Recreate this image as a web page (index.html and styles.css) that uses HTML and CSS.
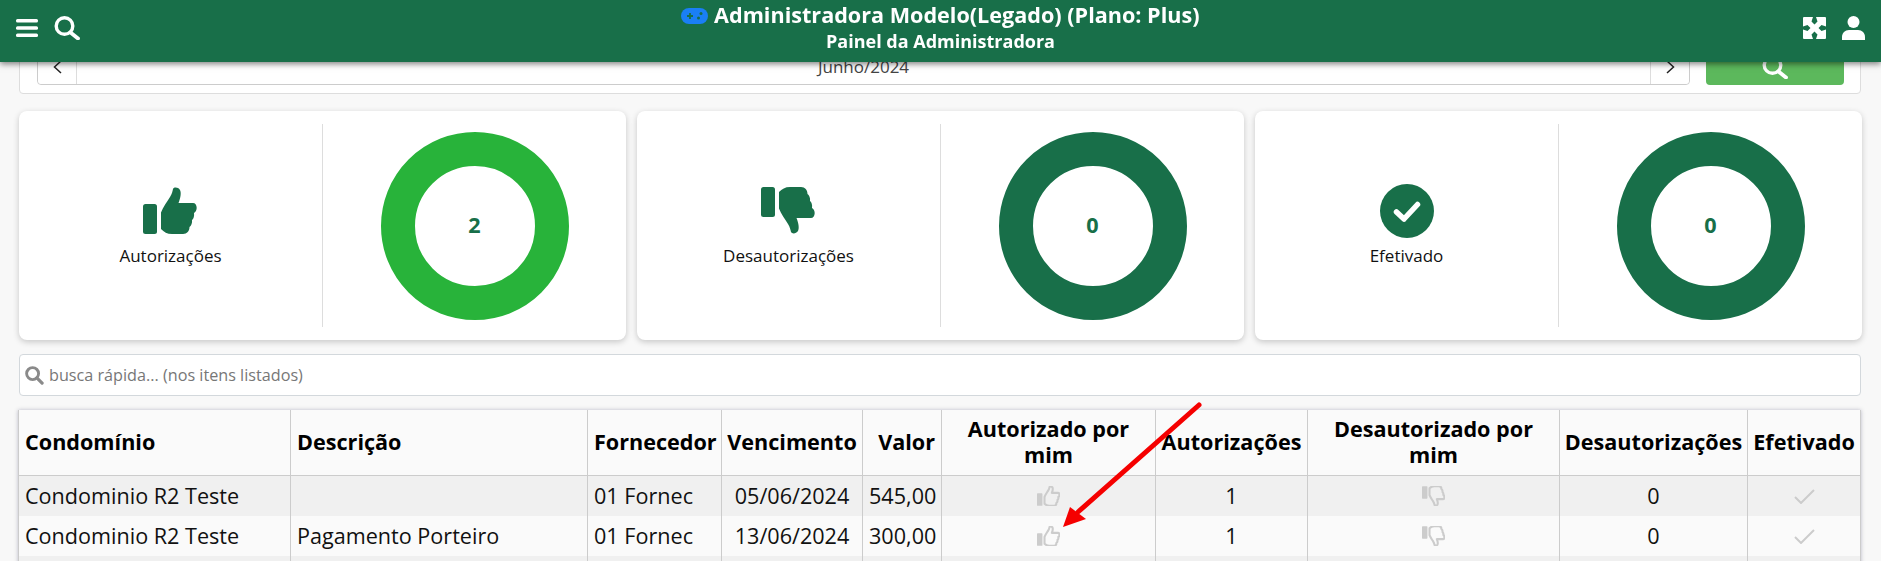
FILE: index.html
```html
<!DOCTYPE html>
<html lang="pt-BR">
<head>
  <meta charset="UTF-8">
  <title>Painel da Administradora</title>
  <link rel="stylesheet" href="styles.css">
</head>
<body>

<svg class="defs" width="0" height="0">
  <defs>
    <path id="hand" d="M18 25.5 C20 20 24 15 27 10 C29 7 29.500 4 30 2 C31 0 35 0 37 3 C38.500 6 37.500 11 35.500 16 H50 C54.500 16 55 24 51 26 C51.500 29 50.500 32 49 33 C49.500 36 48 39 46.500 40 C46.500 44 44 47 40 47 H29 C24 47 21 45 18 42 Z"/>
  </defs>
</svg>

<header class="topbar">
  <div class="topbar-left">
    <svg class="ico-menu" viewBox="0 0 22 18"><rect width="22" height="3.500" rx="1.500"/><rect y="7.200" width="22" height="3.500" rx="1.500"/><rect y="14.500" width="22" height="3.500" rx="1.500"/></svg>
    <svg class="ico-search" viewBox="0 0 26 24"><circle cx="10.500" cy="10" r="8.300" fill="none" stroke="#fff" stroke-width="3.400"/><path d="M16.500 16.500 L24 22.500" stroke="#fff" stroke-width="3.800" stroke-linecap="round"/></svg>
  </div>
  <div class="topbar-title">
    <h1>
      <svg class="ico-game" viewBox="0 0 27 16"><rect width="27" height="16" rx="8" fill="#1a7ff5"/><path d="M6 8 h6 M9 5 v6" stroke="#186f49" stroke-width="1.800"/><circle cx="20" cy="5.500" r="1.500" fill="#186f49"/><circle cx="17.500" cy="10" r="1.500" fill="#186f49"/></svg>
      Administradora Modelo(Legado) (Plano: Plus)
    </h1>
    <h2>Painel da Administradora</h2>
  </div>
  <div class="topbar-right">
    <svg class="ico-expand" viewBox="0 0 23 22"><path fill-rule="evenodd" d="M1 0 H22 Q23 0 23 1 V21 Q23 22 22 22 H1 Q0 22 0 21 V1 Q0 0 1 0 Z M10 0 H13 L14.500 4.500 L11.500 7.500 L8.500 4.500 Z M10 22 H13 L14.500 17.500 L11.500 14.500 L8.500 17.500 Z M0 9.500 V12.500 L4.500 14 L7.500 11 L4.500 8 Z M23 9.500 V12.500 L18.500 14 L15.500 11 L18.500 8 Z"/></svg>
    <svg class="ico-user" viewBox="0 0 23 24"><circle cx="11.500" cy="6" r="6"/><path d="M0 24 V21 C0 17 3 14 7 14 H16 C20 14 23 17 23 21 V24 Z"/></svg>
  </div>
</header>

<main class="page">

  <section class="filter">
    <div class="month">
      <button class="month-btn"><svg viewBox="0 0 9 14"><path d="M8 1 L1.500 7 L8 13" fill="none" stroke="#222" stroke-width="1.500"/></svg></button>
      <div class="month-label">Junho/2024</div>
      <button class="month-btn"><svg viewBox="0 0 9 14"><path d="M1 1 L7.500 7 L1 13" fill="none" stroke="#222" stroke-width="1.500"/></svg></button>
    </div>
    <button class="btn-search">
      <svg viewBox="0 0 26 24"><circle cx="10.500" cy="10" r="8.300" fill="none" stroke="#fff" stroke-width="3.400"/><path d="M16.500 16.500 L24 22.500" stroke="#fff" stroke-width="3.800" stroke-linecap="round"/></svg>
    </button>
  </section>

  <section class="cards">
    <div class="card">
      <div class="card-info">
        <svg class="card-ico" viewBox="0 0 55 47"><rect y="17" width="14" height="30" rx="2.500"/><use href="#hand"/></svg>
        <span>Autorizações</span>
      </div>
      <div class="card-chart">
        <div class="donut donut-on"><b>2</b></div>
      </div>
    </div>
    <div class="card">
      <div class="card-info">
        <svg class="card-ico" viewBox="0 0 55 47"><g transform="matrix(1 0 0 -1 0 47)"><rect y="17" width="14" height="30" rx="2.500"/><use href="#hand"/></g></svg>
        <span>Desautorizações</span>
      </div>
      <div class="card-chart">
        <div class="donut"><b>0</b></div>
      </div>
    </div>
    <div class="card">
      <div class="card-info">
        <svg class="card-ico card-ico-round" viewBox="0 0 54 54"><circle cx="27" cy="27" r="27"/><path d="M16.500 28 L24 35 L37.500 20.500" fill="none" stroke="#fff" stroke-width="5.500" stroke-linecap="round" stroke-linejoin="round"/></svg>
        <span>Efetivado</span>
      </div>
      <div class="card-chart">
        <div class="donut"><b>0</b></div>
      </div>
    </div>
  </section>

  <div class="quick-search">
    <svg viewBox="0 0 20 20"><circle cx="8" cy="8" r="6.300" fill="none" stroke="#8a8a8a" stroke-width="3"/><path d="M12.500 12.500 L18 18" stroke="#8a8a8a" stroke-width="3.400" stroke-linecap="round"/></svg>
    <span>busca rápida... (nos itens listados)</span>
  </div>

  <table class="grid">
    <colgroup>
      <col class="c-cond"><col class="c-desc"><col class="c-forn"><col class="c-venc"><col class="c-valor">
      <col class="c-aut-mim"><col class="c-aut"><col class="c-des-mim"><col class="c-des"><col class="c-efe">
    </colgroup>
    <thead>
      <tr>
        <th>Condomínio</th>
        <th>Descrição</th>
        <th>Fornecedor</th>
        <th class="mid">Vencimento</th>
        <th class="num">Valor</th>
        <th class="mid">Autorizado por mim</th>
        <th class="mid">Autorizações</th>
        <th class="mid">Desautorizado por mim</th>
        <th class="mid">Desautorizações</th>
        <th class="mid">Efetivado</th>
      </tr>
    </thead>
    <tbody>
      <tr>
        <td>Condominio R2 Teste</td>
        <td></td>
        <td>01 Fornec</td>
        <td class="mid">05/06/2024</td>
        <td class="num">545,00</td>
        <td class="mid"><svg class="row-ico" viewBox="0 0 55 47"><rect y="17" width="13" height="30" rx="1.500" class="solid"/><use href="#hand" class="outline"/></svg></td>
        <td class="mid">1</td>
        <td class="mid"><svg class="row-ico" viewBox="0 0 55 47"><g transform="matrix(1 0 0 -1 0 47)"><rect y="17" width="13" height="30" rx="1.500" class="solid"/><use href="#hand" class="outline"/></g></svg></td>
        <td class="mid">0</td>
        <td class="mid"><svg class="row-check" viewBox="0 0 21 15"><path d="M1 8 L7 14 L20 1" fill="none" stroke="#ccc" stroke-width="2"/></svg></td>
      </tr>
      <tr>
        <td>Condominio R2 Teste</td>
        <td>Pagamento Porteiro</td>
        <td>01 Fornec</td>
        <td class="mid">13/06/2024</td>
        <td class="num">300,00</td>
        <td class="mid"><svg class="row-ico" viewBox="0 0 55 47"><rect y="17" width="13" height="30" rx="1.500" class="solid"/><use href="#hand" class="outline"/></svg></td>
        <td class="mid">1</td>
        <td class="mid"><svg class="row-ico" viewBox="0 0 55 47"><g transform="matrix(1 0 0 -1 0 47)"><rect y="17" width="13" height="30" rx="1.500" class="solid"/><use href="#hand" class="outline"/></g></svg></td>
        <td class="mid">0</td>
        <td class="mid"><svg class="row-check" viewBox="0 0 21 15"><path d="M1 8 L7 14 L20 1" fill="none" stroke="#ccc" stroke-width="2"/></svg></td>
      </tr>
      <tr>
        <td>&nbsp;</td><td></td><td></td><td></td><td></td><td></td><td></td><td></td><td></td><td></td>
      </tr>
    </tbody>
  </table>
</main>

<svg class="arrow" viewBox="0 0 1881 561">
  <path d="M1199 405 L1078 512" fill="none" stroke="#f50000" stroke-width="5" stroke-linecap="round"/>
  <path d="M1063 527 L1070 507 L1086 519 Z" fill="#f50000"/>
</svg>

</body>
</html>
```

FILE: styles.css
```css
html, body {
  height: 100%;
  overflow: hidden;
}

body {
  margin: 0;
  font-family: "Open Sans", sans-serif;
  background-color: #f8f8f8;
  color: #000;
}

.defs {
  position: absolute;
}

.topbar {
  position: fixed;
  top: 0;
  left: 0;
  right: 0;
  height: 62px;
  display: flex;
  justify-content: space-between;
  background-color: #186f49;
  box-shadow: 0 2px 6px rgba(0, 0, 0, 0.5);
  z-index: 10;
}

.topbar svg {
  fill: #fff;
  display: block;
}

.topbar-left {
  display: flex;
  align-items: center;
  gap: 16px;
  padding: 0 0 6px 16px;
}

.topbar-right {
  display: flex;
  align-items: center;
  gap: 16px;
  padding: 0 16px 6px 0;
}

.ico-menu { width: 22px; height: 18px; }
.ico-search { width: 26px; height: 24px; }
.ico-expand { width: 23px; height: 22px; }
.ico-user { width: 23px; height: 24px; }

.topbar-title {
  position: absolute;
  left: 0;
  right: 0;
  top: 2px;
  text-align: center;
  color: #fff;
}

.topbar-title h1 {
  margin: 0;
  font-size: 21.6px;
  line-height: 26px;
  font-weight: 700;
}

.topbar-title h2 {
  margin: 0;
  font-size: 18px;
  line-height: 26px;
  font-weight: 700;
}

.topbar-title .ico-game {
  display: inline-block;
  width: 27px;
  height: 16px;
  vertical-align: -1px;
}

.page {
  padding: 41px 20px 0 19px;
}

.filter {
  display: flex;
  gap: 16px;
  height: 53px;
  box-sizing: border-box;
  padding: 6px 16px 8px 17px;
  background: #fff;
  border: 1px solid #ddd;
  border-radius: 4px;
}

.month {
  flex: 1;
  display: flex;
  border: 1px solid #ccc;
  border-radius: 4px;
  background: #fff;
}

.month-btn {
  width: 38px;
  padding: 0;
  border: 0;
  background: #fff;
  border-radius: 4px;
  display: flex;
  align-items: center;
  justify-content: center;
}

.month-btn svg {
  width: 9px;
  height: 14px;
}

.month-label {
  flex: 1;
  border-left: 1px solid #ddd;
  border-right: 1px solid #ddd;
  text-align: center;
  font-size: 17px;
  line-height: 36px;
  color: #444;
}

.btn-search {
  width: 138px;
  border: 0;
  border-radius: 4px;
  background-color: #5cb85c;
  display: flex;
  align-items: center;
  justify-content: center;
  padding: 0;
}

.btn-search svg {
  width: 26px;
  height: 24px;
}

.cards {
  display: flex;
  gap: 11px;
  margin: 17px -1px 0 0;
}

.card {
  flex: 1;
  height: 229px;
  display: flex;
  background: #fff;
  border-radius: 8px;
  box-shadow: 0 2px 6px rgba(0, 0, 0, 0.2);
}

.card-info {
  width: 303px;
  margin: 13px 0;
  border-right: 1px solid #ddd;
  display: flex;
  flex-direction: column;
  align-items: center;
  justify-content: center;
  gap: 6px;
  font-size: 17px;
  line-height: 24px;
  color: #111;
}

.card-ico {
  width: 55px;
  height: 47px;
  margin: 3.5px 0;
  fill: #186f49;
}

.card-ico-round {
  width: 54px;
  height: 54px;
  margin: 0;
}

.card-chart {
  flex: 1;
  display: flex;
  align-items: center;
  justify-content: center;
}

.donut {
  width: 120px;
  height: 120px;
  border: 34px solid #186f49;
  border-radius: 50%;
  display: flex;
  align-items: center;
  justify-content: center;
  font-size: 21.6px;
  color: #186f49;
}

.donut b {
  padding-bottom: 2px;
}

.donut-on {
  border-color: #28b33a;
}

.quick-search {
  display: flex;
  align-items: center;
  gap: 5px;
  height: 42px;
  box-sizing: border-box;
  margin-top: 14px;
  padding-left: 5px;
  background: #fff;
  border: 1px solid #d3d8dc;
  border-radius: 4px;
  font-size: 16.2px;
  color: #777;
}

.quick-search svg {
  width: 19px;
  height: 19px;
}

.grid {
  width: 1842px;
  margin: 14px 0 0 -1px;
  table-layout: fixed;
  border-collapse: collapse;
  background: #fafafa;
  box-shadow: 0 0 4px rgba(0, 0, 60, 0.25);
  font-size: 21.6px;
}

.c-cond { width: 272px; }
.c-desc { width: 297px; }
.c-forn { width: 134px; }
.c-venc { width: 141px; }
.c-valor { width: 79px; }
.c-aut-mim { width: 214px; }
.c-aut { width: 152px; }
.c-des-mim { width: 252px; }
.c-des { width: 188px; }
.c-efe { width: 113px; }

.grid th, .grid td {
  padding: 0 6px 2px;
  border-left: 1px solid #ccc;
  border-right: 1px solid #ccc;
  text-align: left;
}

.grid th {
  height: 63px;
  line-height: 26px;
  font-weight: 700;
  border-bottom: 1px solid #ccc;
}

.grid td {
  height: 38px;
  font-weight: 400;
  color: #111;
}

.grid tbody tr:nth-child(odd) {
  background-color: #f0f0f0;
}

.grid .mid {
  padding: 0 2px 2px;
  text-align: center;
}

.grid .num { text-align: right; }

.row-ico {
  display: block;
  width: 23px;
  height: 20px;
  margin: 2px auto 0;
}

.row-ico .solid { fill: #ccc; }
.row-ico .outline {
  fill: none;
  stroke: #ccc;
  stroke-width: 5;
  stroke-linejoin: round;
}

.row-check {
  display: block;
  width: 21px;
  height: 15px;
  margin: 2px auto 0;
}

.arrow {
  position: fixed;
  top: 0;
  left: 0;
  width: 1881px;
  height: 561px;
  z-index: 5;
  pointer-events: none;
}
```
